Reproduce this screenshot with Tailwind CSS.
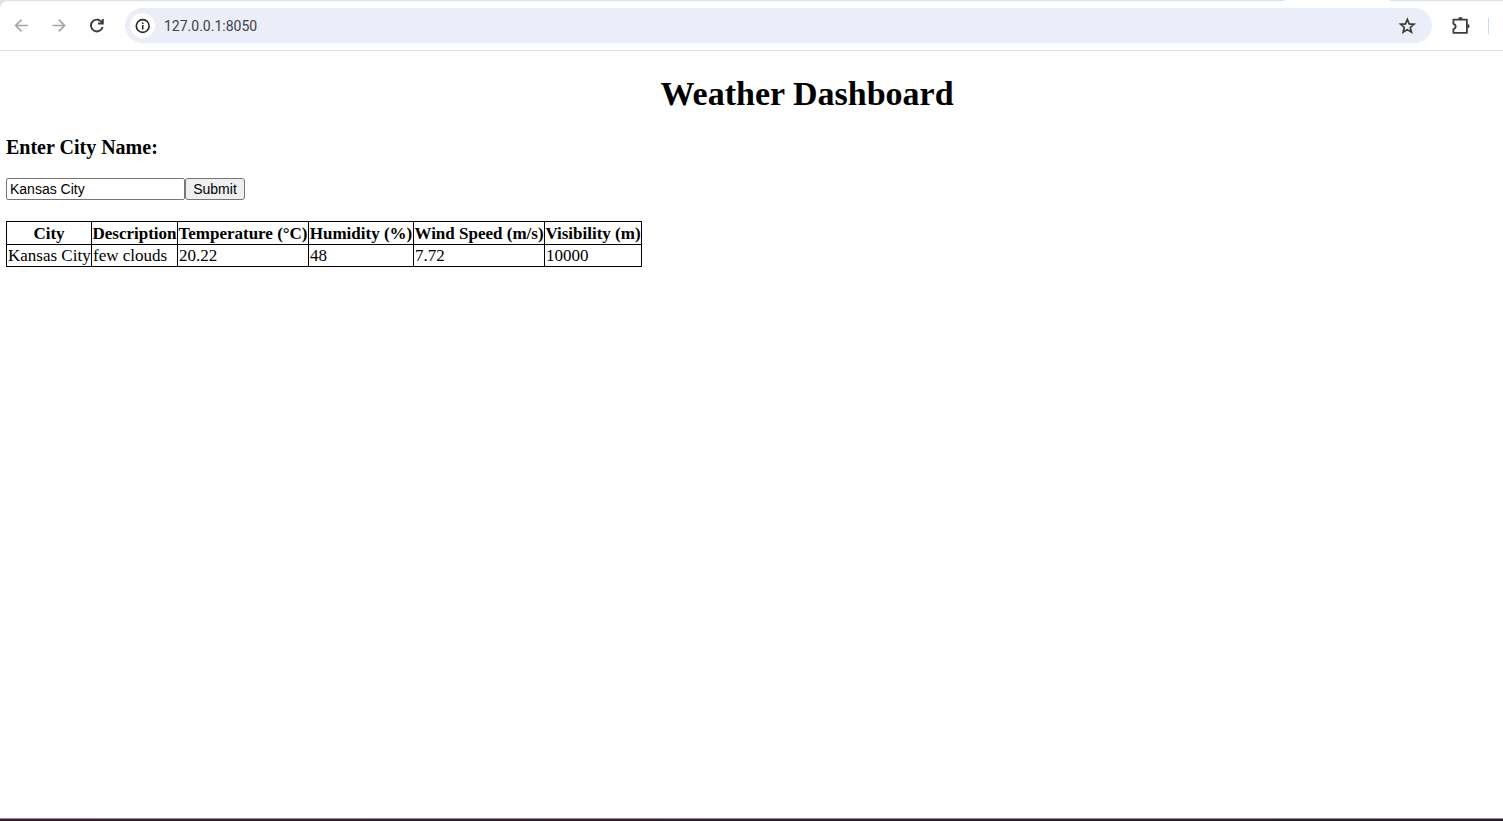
<!DOCTYPE html>
<html lang="en">
<head>
<meta charset="utf-8">
<title>Weather Dashboard</title>
<script src="https://cdn.jsdelivr.net/npm/@tailwindcss/browser@4"></script>
</head>
<body class="min-h-screen flex flex-col bg-white text-black font-['Liberation_Serif',serif]">
<header class="bg-[#dde2ea] pt-px">
  <div class="relative flex items-center h-[50px] bg-white rounded-tl-lg border-b border-[#e2e3e5] pl-3 pr-[14px]">
    <span class="absolute -top-px right-[113px] w-[106px] h-px bg-white"></span>
    <button aria-label="Back" class="size-5 text-[#a5a5a5]"><svg viewBox="0 0 20 20" class="size-5" fill="none" stroke="currentColor" stroke-width="1.7"><path d="M15.800 9.500H4M9.500 3.700 3.700 9.500 9.500 15.300"/></svg></button>
    <button aria-label="Forward" class="size-5 ml-[17px] text-[#a5a5a5]"><svg viewBox="0 0 20 20" class="size-5" fill="none" stroke="currentColor" stroke-width="1.700"><path d="M3.500 9.500H15.500M9.800 3.700 15.600 9.500 9.800 15.300"/></svg></button>
    <button aria-label="Reload" class="size-5 ml-[18px] text-[#3c3c3c]"><svg viewBox="0 0 20 20" class="size-5" fill="none" stroke="currentColor" stroke-width="1.900"><path d="M15.300 7.200A5.900 5.900 0 1 0 15.600 10.900"/><path d="M15.800 2.900V7.500H11"/></svg></button>
    <div class="flex grow items-center h-[35px] ml-[18px] rounded-full bg-[#ebeef8] pl-[5px] pr-[15px]">
      <button aria-label="Site information" class="flex items-center justify-center size-[25px] rounded-full bg-white text-[#262626]"><svg viewBox="0 0 16 16" class="size-4"><circle cx="7.700" cy="8" r="6.400" fill="none" stroke="currentColor" stroke-width="1.600"/><path fill="currentColor" d="M6.900 7h1.600v4.500H6.900zM6.900 4.400h1.600V6H6.900z"/></svg></button>
      <input aria-label="Address" value="127.0.0.1:8050" class="grow min-w-0 ml-[9px] pt-[2px] bg-transparent text-[14px] text-[#3f4146] font-[Roboto,sans-serif] outline-none">
      <button aria-label="Bookmark" class="size-5 text-[#3c3c3c]"><svg viewBox="0 0 20 20" class="size-5" fill="none" stroke="currentColor" stroke-width="1.700"><path d="m10.300 3.400 1.850 4.500 4.850.4-3.700 3.150 1.150 4.750-4.150-2.550L6.150 16.200l1.150-4.750L3.600 8.300l4.850-.4z"/></svg></button>
    </div>
    <button aria-label="Extensions" class="size-5 ml-[19px] text-[#3c3c3c]"><svg viewBox="0 0 20 20" class="size-5"><path fill="none" stroke="currentColor" stroke-width="1.800" stroke-linejoin="round" d="M2.400 3.600H15.900V16.800H2.400V13.200C5.400 12.400 5.400 8.600 2.400 7.800z"/><path fill="currentColor" d="M7.300 3.200a2.100 2.100 0 0 1 4.200 0zM16.500 8.100a2.100 2.100 0 0 1 0 4.200z"/></svg></button>
    <span class="w-px h-4 ml-[17px] bg-[#c7dafa]"></span>
  </div>
</header>
<main class="grow px-[6px] pt-[23px]">
  <h1 class="pl-[111px] text-center text-[34px] leading-10 font-bold">Weather Dashboard</h1>
  <form onsubmit="return false">
    <h3 class="mt-[21px] text-[20px] leading-6 font-bold"><label for="city">Enter City Name:</label></h3>
    <div class="flex mt-[19px] font-['Liberation_Sans',sans-serif] text-[14px]">
      <input id="city" type="text" value="Kansas City" class="w-[179px] h-[22px] px-[3px] pb-px border border-[#767676] rounded-xs">
      <button class="w-[60px] h-[22px] pb-px border border-[#767676] rounded-[3px] bg-[#efefef]">Submit</button>
    </div>
  </form>
  <table class="mt-[21px] border-collapse text-[17px] leading-5 whitespace-nowrap table-fixed w-[636px] [&_th]:border [&_td]:border [&_th]:px-0 [&_td]:px-px [&_th]:pt-px [&_td]:pt-px">
    <colgroup><col class="w-[85px]"><col class="w-[86px]"><col class="w-[131px]"><col class="w-[105px]"><col class="w-[131px]"><col class="w-[97px]"></colgroup>
    <thead><tr class="h-[23px]"><th>City</th><th>Description</th><th>Temperature (°C)</th><th>Humidity (%)</th><th>Wind Speed (m/s)</th><th>Visibility (m)</th></tr></thead>
    <tbody><tr class="h-[22px]"><td>Kansas City</td><td>few clouds</td><td>20.22</td><td>48</td><td>7.72</td><td>10000</td></tr></tbody>
  </table>
</main>
<footer class="h-[3px] border-t border-[#948c96] bg-linear-to-r from-[#3b1a2c] to-[#2b1c32]"></footer>
</body>
</html>
